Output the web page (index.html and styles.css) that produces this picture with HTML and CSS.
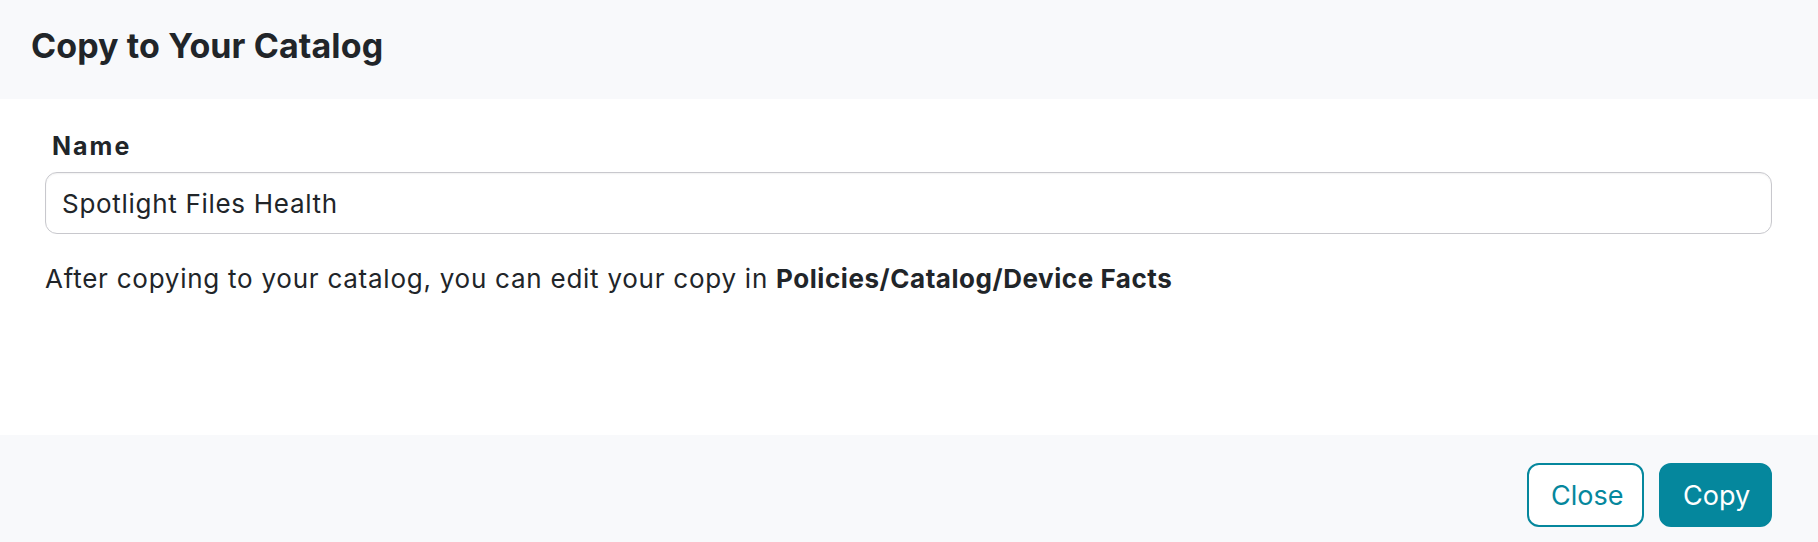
FILE: index.html
```html
<!DOCTYPE html>
<html>
<head>
<meta charset="utf-8">
<link rel="stylesheet" href="styles.css">
</head>
<body>
<div class="modal">
  <div class="modal-header">
    <h1 class="modal-title">Copy to Your Catalog</h1>
  </div>
  <div class="modal-body">
    <label class="field-label" for="name">Name</label>
    <input class="field-input" id="name" type="text" value="Spotlight Files Health">
    <p class="help">After copying to your catalog, you can edit your copy in <strong>Policies/Catalog/Device Facts</strong></p>
  </div>
  <div class="modal-footer">
    <button class="btn btn-outline">Close</button>
    <button class="btn btn-primary">Copy</button>
  </div>
</div>
</body>
</html>
```
FILE: styles.css
```css
* { box-sizing: border-box; }
html, body { margin: 0; padding: 0; height: 100%; }
body {
  font-family: Inter, "Noto Sans", "Liberation Sans", sans-serif;
  color: #212529;
  background: #ffffff;
}
.modal {
  display: flex;
  flex-direction: column;
  height: 542px;
}
.modal-header {
  height: 99px;
  background: #f8f9fb;
  display: flex;
  align-items: center;
  padding: 0 31px 8px;
}
.modal-title {
  margin: 0;
  font-size: 34px;
  font-weight: 700;
  letter-spacing: 0.1px;
}
.modal-body {
  flex: 1;
  padding: 31px 46px 0 45px;
  display: flex;
  flex-direction: column;
}
.field-label {
  font-size: 25px;
  font-weight: 700;
  padding-left: 7px;
  line-height: 32px;
  margin-bottom: 10px;
  letter-spacing: 2px;
}
.field-input {
  width: 100%;
  height: 62px;
  border: 1.5px solid #c8c8cd;
  border-radius: 12px;
  padding: 0 16px;
  font-family: inherit;
  font-size: 26px;
  letter-spacing: 0.7px;
  color: #212529;
  box-shadow: inset 0 1px 2px rgba(0,0,0,0.06);
  outline: none;
}
.help {
  margin: 28px 0 0 0;
  font-size: 26px;
  line-height: 34px;
  letter-spacing: 0.75px;
}
.help strong { font-weight: 700; letter-spacing: 0.55px; }
.modal-footer {
  height: 107px;
  background: #f8f9fb;
  display: flex;
  justify-content: flex-end;
  align-items: flex-start;
  gap: 15px;
  padding: 28px 46px 0 0;
}
.btn {
  height: 64px;
  border-radius: 12px;
  font-family: inherit;
  font-size: 27px;
  padding: 0 22px;
  cursor: pointer;
}
.btn-outline {
  width: 117px;
  background: #ffffff;
  color: #05879d;
  border: 2px solid #05879d;
}
.btn-primary {
  width: 113px;
  background: #05879d;
  color: #ffffff;
  border: 2px solid #05879d;
}
```
